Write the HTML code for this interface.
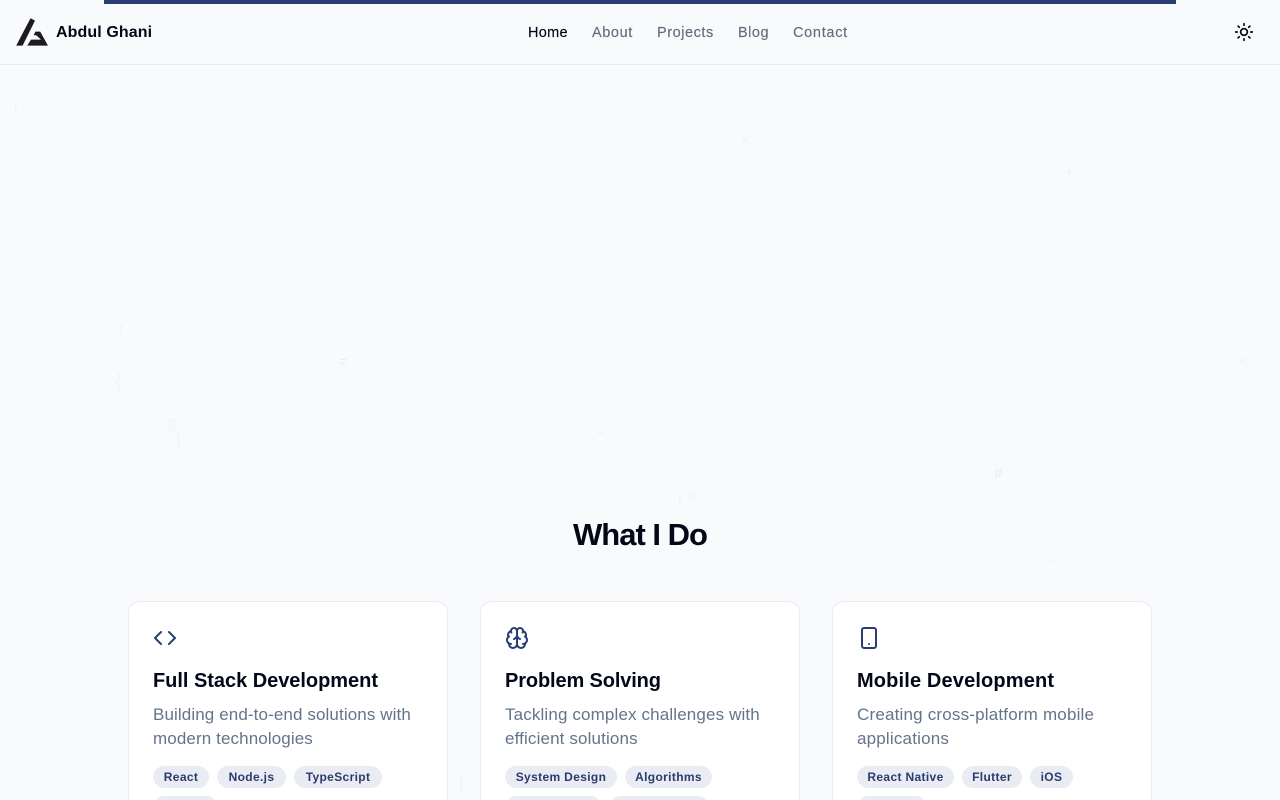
<!DOCTYPE html>
<html lang="en">
<head>
<meta charset="utf-8">
<title>Abdul Ghani</title>
<style>
*{box-sizing:border-box;margin:0;padding:0}
html,body{width:1280px;height:800px;overflow:hidden}
body{position:relative;background:#f9fafc;font-family:"Liberation Sans",sans-serif;color:#020817}
main{position:absolute;left:0;top:0;width:1280px;height:800px;overflow:hidden}
.abs{position:absolute;white-space:nowrap}
.bar{position:absolute;left:104px;top:0;width:1072px;height:4px;background:#2a3e72}
header{position:absolute;left:0;top:0;width:1280px;height:65px;border-bottom:1px solid #e6ebf3}
.brand{left:56px;top:23px;font-size:16px;line-height:20px;font-weight:700;color:#020817;letter-spacing:.1px}
nav a{position:absolute;top:23px;font-size:14.5px;line-height:20px;color:#666c7b;text-decoration:none;white-space:nowrap;-webkit-text-stroke:.15px currentColor}
h2{position:absolute;left:0;top:514px;width:1280px;text-align:center;font-size:31px;line-height:42px;font-weight:700;letter-spacing:-1px;color:#020817}
.card{position:absolute;top:601px;width:320px;height:300px;background:#fff;border:1px solid #e9edf4;border-radius:12px;box-shadow:0 1px 2px rgba(15,23,42,.03)}
.card svg{position:absolute;left:24px;top:24px}
.card h3{position:absolute;left:24px;top:66px;font-size:20px;line-height:26px;font-weight:700;white-space:nowrap;color:#020817}
.card p{position:absolute;left:24px;top:101px;width:290px;font-size:17px;line-height:24px;color:#64748b;white-space:nowrap}
.chip{position:absolute;height:22px;border-radius:11px;background:#e9ecf2;color:#2a3b6e;font-size:12px;line-height:22px;font-weight:700;text-align:center;white-space:nowrap;letter-spacing:.35px}
.g{position:absolute;font-family:"Liberation Mono",monospace;color:#f0f3f6;line-height:1;white-space:nowrap}
</style>
</head>
<body>
<main>
<span class="g" style="left:11px;top:100px;font-size:16px">|</span>
<span class="g" style="left:741px;top:135px;font-size:13px">×</span>
<span class="g" style="left:1065px;top:166px;font-size:15px">+</span>
<span class="g" style="left:1016px;top:303px;font-size:12px">-</span>
<span class="g" style="left:114px;top:323px;font-size:24px;color:#f4f6f8">!</span>
<span class="g" style="left:339px;top:356px;font-size:14px;color:#e9edf2">=</span>
<span class="g" style="left:1238px;top:355px;font-size:15px">&lt;</span>
<span class="g" style="left:112px;top:372px;font-size:22px;color:#f3f5f8">{</span>
<span class="g" style="left:166px;top:418px;font-size:18px;color:#f2f4f7">$</span>
<span class="g" style="left:172px;top:432px;font-size:18px;color:#f2f4f7">]</span>
<span class="g" style="left:597px;top:427px;font-size:12px;color:#eaedf2">—</span>
<span class="g" style="left:994px;top:467px;font-size:15px;color:#e9edf2">#</span>
<span class="g" style="left:688px;top:491px;font-size:12px">0</span>
<span class="g" style="left:675px;top:495px;font-size:16px">!</span>
<span class="g" style="left:1046px;top:554px;font-size:14px">&lt;</span>
<span class="g" style="left:456px;top:776px;font-size:18px">|</span>

<header>
  <svg class="abs" style="left:0;top:0" width="60" height="60" viewBox="0 0 60 60">
    <path fill="#1c1c1e" d="M30.5 18.2 35 20.6 22.6 45.6H16.2Z"/>
    <path fill="#1c1c1e" d="M35.4 31.6H40.2L48 45.6H27.2L31 39.6H41L36.2 35.2H33.6Z"/>
  </svg>
  <div class="abs brand">Abdul Ghani</div>
  <nav>
    <a href="#" style="left:528px;letter-spacing:.3px;color:#020817">Home</a>
    <a href="#" style="left:592px;letter-spacing:.6px">About</a>
    <a href="#" style="left:657px;letter-spacing:.55px">Projects</a>
    <a href="#" style="left:738px;letter-spacing:.5px">Blog</a>
    <a href="#" style="left:793px;letter-spacing:.7px">Contact</a>
  </nav>
  <svg class="abs" style="left:1234px;top:22px" width="20" height="20" viewBox="0 0 24 24" fill="none" stroke="#020817" stroke-width="2" stroke-linecap="round" stroke-linejoin="round">
    <circle cx="12" cy="12" r="4"/><path d="M12 2v2M12 20v2M4.93 4.93l1.41 1.41M17.66 17.66l1.41 1.41M2 12h2M20 12h2M6.34 17.66l-1.41 1.41M19.07 4.93l-1.41 1.41"/>
  </svg>
</header>
<div class="bar"></div>

<h2>What I Do</h2>

<section class="card" style="left:128px">
  <svg width="24" height="24" viewBox="0 0 24 24" fill="none" stroke="#2a3e72" stroke-width="2" stroke-linecap="round" stroke-linejoin="round"><polyline points="16 18 22 12 16 6"/><polyline points="8 6 2 12 8 18"/></svg>
  <h3 style="letter-spacing:-.03px">Full Stack Development</h3>
  <p style="letter-spacing:.11px">Building end-to-end solutions with<br>modern technologies</p>
  <span class="chip" style="left:24px;top:164px;width:56px">React</span>
  <span class="chip" style="left:88px;top:164px;width:69px">Node.js</span>
  <span class="chip" style="left:165px;top:164px;width:88px">TypeScript</span>
  <span class="chip" style="left:24px;top:194px;width:64px">Python</span>
</section>

<section class="card" style="left:480px">
  <svg width="24" height="24" viewBox="0 0 24 24" fill="none" stroke="#2a3e72" stroke-width="2" stroke-linecap="round" stroke-linejoin="round"><path d="M12 5a3 3 0 1 0-5.997.125 4 4 0 0 0-2.526 5.77 4 4 0 0 0 .556 6.588A4 4 0 1 0 12 18Z"/><path d="M12 5a3 3 0 1 1 5.997.125 4 4 0 0 1 2.526 5.77 4 4 0 0 1-.556 6.588A4 4 0 1 1 12 18Z"/><path d="M15 13a4.5 4.5 0 0 1-3-4 4.5 4.5 0 0 1-3 4"/><path d="M17.599 6.5a3 3 0 0 0 .399-1.375"/><path d="M6.003 5.125A3 3 0 0 0 6.401 6.5"/><path d="M3.477 10.896a4 4 0 0 1 .585-.396"/><path d="M19.938 10.5a4 4 0 0 1 .585.396"/><path d="M6 18a4 4 0 0 1-1.967-.516"/><path d="M19.967 17.484A4 4 0 0 1 18 18"/></svg>
  <h3 style="letter-spacing:-.13px">Problem Solving</h3>
  <p style="letter-spacing:.14px">Tackling complex challenges with<br>efficient solutions</p>
  <span class="chip" style="left:24px;top:164px;width:112px">System Design</span>
  <span class="chip" style="left:144px;top:164px;width:87px">Algorithms</span>
  <span class="chip" style="left:24px;top:194px;width:96px">Data Structures</span>
  <span class="chip" style="left:129px;top:194px;width:99px">Optimization</span>
</section>

<section class="card" style="left:832px">
  <svg width="24" height="24" viewBox="0 0 24 24" fill="none" stroke="#2a3e72" stroke-width="2" stroke-linecap="round" stroke-linejoin="round"><rect x="5" y="2" width="14" height="20" rx="2" ry="2"/><path d="M12 18h.01"/></svg>
  <h3 style="letter-spacing:.15px">Mobile Development</h3>
  <p style="letter-spacing:.19px">Creating cross-platform mobile<br>applications</p>
  <span class="chip" style="left:24px;top:164px;width:97px">React Native</span>
  <span class="chip" style="left:129px;top:164px;width:60px">Flutter</span>
  <span class="chip" style="left:197px;top:164px;width:43px">iOS</span>
  <span class="chip" style="left:24px;top:194px;width:70px">Android</span>
</section>
</main>
</body>
</html>
